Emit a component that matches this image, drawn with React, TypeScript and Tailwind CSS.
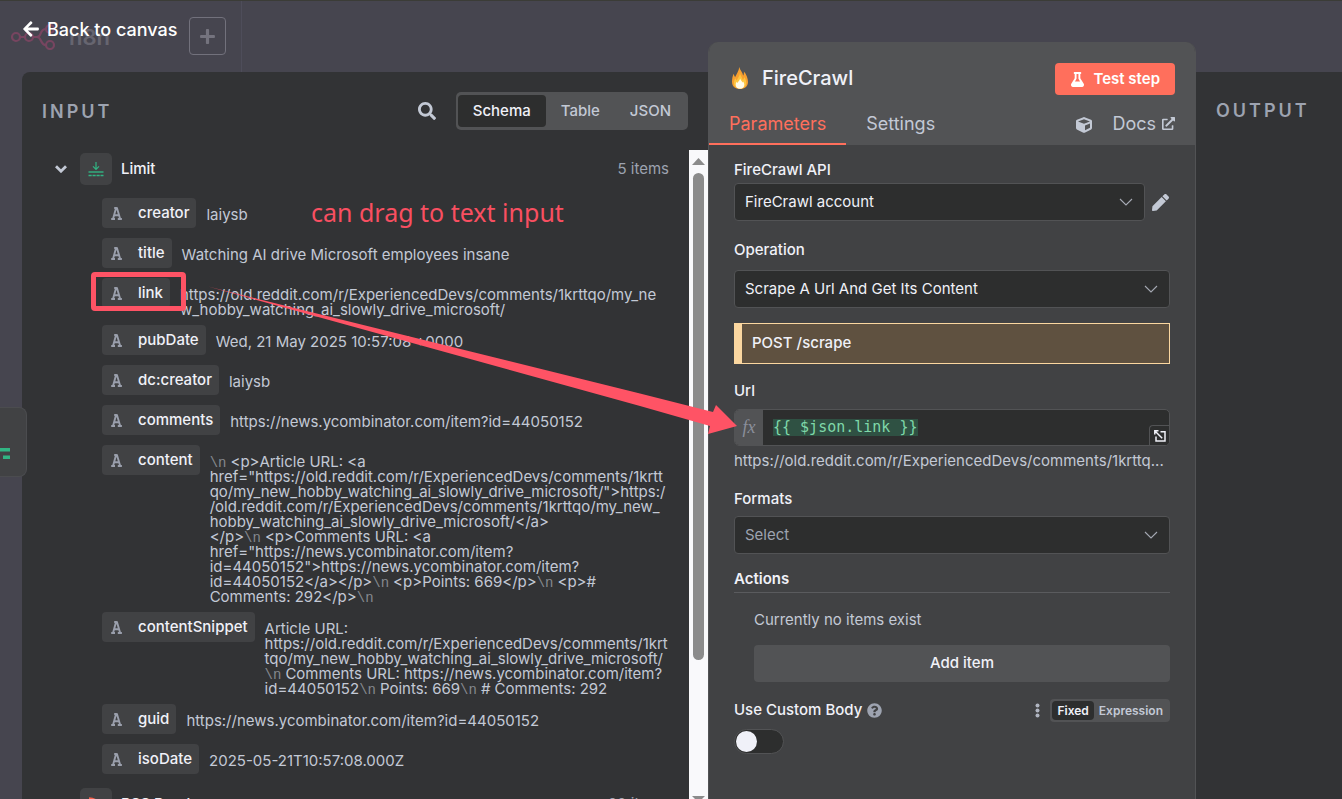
import { ReactNode } from "react";
import {
  FaArrowLeft,
  FaCube,
  FaExternalLinkAlt,
  FaFlask,
  FaPen,
  FaPlus,
  FaQuestionCircle,
  FaSearch,
} from "react-icons/fa";

type Field = { name: string; lines: string[] };

const fields: Field[] = [
  { name: "creator", lines: ["laiysb"] },
  { name: "title", lines: ["Watching AI drive Microsoft employees insane"] },
  {
    name: "link",
    lines: [
      "https://old.reddit.com/r/ExperiencedDevs/comments/1krttqo/my_ne",
      "w_hobby_watching_ai_slowly_drive_microsoft/",
    ],
  },
  { name: "pubDate", lines: ["Wed, 21 May 2025 10:57:08 +0000"] },
  { name: "dc:creator", lines: ["laiysb"] },
  { name: "comments", lines: ["https://news.ycombinator.com/item?id=44050152"] },
  {
    name: "content",
    lines: [
      "\n<p>Article URL: <a",
      'href="https://old.reddit.com/r/ExperiencedDevs/comments/1krtt',
      'qo/my_new_hobby_watching_ai_slowly_drive_microsoft/">https:/',
      "/old.reddit.com/r/ExperiencedDevs/comments/1krttqo/my_new_",
      "hobby_watching_ai_slowly_drive_microsoft/</a>",
      "</p>\n<p>Comments URL: <a",
      'href="https://news.ycombinator.com/item?',
      'id=44050152">https://news.ycombinator.com/item?',
      "id=44050152</a></p>\n<p>Points: 669</p>\n<p>#",
      "Comments: 292</p>\n",
    ],
  },
  {
    name: "contentSnippet",
    lines: [
      "Article URL:",
      "https://old.reddit.com/r/ExperiencedDevs/comments/1krt",
      "tqo/my_new_hobby_watching_ai_slowly_drive_microsoft/",
      "\nComments URL: https://news.ycombinator.com/item?",
      "id=44050152\nPoints: 669\n# Comments: 292",
    ],
  },
  { name: "guid", lines: ["https://news.ycombinator.com/item?id=44050152"] },
  { name: "isoDate", lines: ["2025-05-21T10:57:08.000Z"] },
];

function Line({ text }: { text: string }) {
  const parts = text.split("\n");
  return (
    <div className="h-[15px] whitespace-nowrap">
      {parts.map((part, i) => (
        <span key={i}>
          {i > 0 && (
            <span className="mr-1 font-['Liberation_Mono',monospace] text-[14px] text-[#85888e]">
              {"\\n"}
            </span>
          )}
          {part}
        </span>
      ))}
    </div>
  );
}

function TextTypeIcon() {
  return (
    <svg viewBox="0 0 11 13" className="h-[13px] w-[11px]" aria-hidden="true">
      <path
        d="M0.2 12h3.800M6.800 12H10.900M2 12L5 1.200h1L9.200 12M3.200 8.300h4.600M3.200 1h2.600"
        fill="none"
        stroke="#9a9fac"
        strokeWidth="1.900"
      />
    </svg>
  );
}

function FieldRow({ field }: { field: Field }) {
  return (
    <li className="mb-2 flex min-h-8 items-start gap-[10px]">
      <button className="flex h-[30px] shrink-0 items-center rounded-[4px] bg-[#414244] pr-[7px] pl-[9px] font-medium text-[#f0f1f8]">
        <TextTypeIcon />
        <span className="ml-4">{field.name}</span>
      </button>
      <div className="pt-[9px] leading-[15px] text-[#c3c9d5]">
        {field.lines.map((line, i) => (
          <Line key={i} text={line} />
        ))}
      </div>
    </li>
  );
}

function CollapseIcon() {
  return (
    <svg viewBox="0 0 12 8" className="h-2 w-3" fill="none" stroke="#c3c9d5" strokeWidth="2.800" aria-hidden="true">
      <path d="M1 1.200l5 5 5-5" />
    </svg>
  );
}

function LimitIcon() {
  return (
    <svg viewBox="0 0 16 16" className="size-4" fill="none" stroke="#31b583" aria-hidden="true">
      <path d="M8 1v7M5 5.300l3 3 3-3" strokeWidth="1.200" />
      <path d="M0.500 11h15" strokeWidth="1.400" />
      <path d="M0.500 14.500h15" strokeWidth="1.400" strokeDasharray="3.200 0.800" />
    </svg>
  );
}

function FlameIcon() {
  return (
    <svg viewBox="0 0 18 24" className="h-6 w-[18px]" aria-hidden="true">
      <path
        d="M8.200 1c.8 3.200 3.600 5 3.900 8.600.7-.9 1-2.600.8-4.200 2.500 2.900 4.100 6.800 4.100 10.500 0 4.300-3.500 7.100-8 7.100S1 20.200 1 15.900c0-3 .6-5.900 1.700-8.200.4 1.500.8 2.700 1.500 3.400C5.500 7.600 8 5.200 8.200 1z"
        fill="#f7a030"
      />
      <path
        d="M9 7c.3 2.800 2.500 4.500 2.700 7 .8-.6 1.400-1.700 1.600-3 1.300 1.800 1.900 4 1.900 6 0 3.500-2.800 5.500-6.200 5.500s-6-2-6-5.200c0-1.900.5-3.600 1.400-5 .3 1 .7 1.800 1.300 2.300C6.300 12.200 8.800 10.500 9 7z"
        fill="#fdc640"
      />
      <path
        d="M9.200 12.500c.2 1.700 1.800 2.300 2 3.900.4-.2.600-.6.800-1 .9 1 1.300 2 1.300 3.300 0 2.500-1.800 4.100-4.300 4.100s-4.300-1.600-4.300-4c0-1.300.5-2.300 1.200-3 .2.500.4.800.8 1.100.4-1.500 2-2.300 2.500-4.400z"
        fill="#fffbe8"
      />
    </svg>
  );
}

function N8nLogo() {
  return (
    <svg viewBox="0 0 46 26" className="h-[26px] w-[46px]" fill="none" stroke="#774560" strokeWidth="2.200" aria-hidden="true">
      <circle cx="5" cy="13" r="4" />
      <circle cx="18" cy="13" r="4" />
      <circle cx="39" cy="5" r="4" />
      <circle cx="39" cy="21" r="4" />
      <path d="M9 13h5M22 13h4c5 0 2-8 9-8M26 13c5 0 3 8 9 8" />
    </svg>
  );
}

function SelectBox({ id, value, muted }: { id: string; value: string; muted?: boolean }) {
  return (
    <div className="relative flex-1">
      <select
        id={id}
        className={
          muted
            ? "h-[38px] w-full appearance-none rounded-[4px] border border-[#525355] bg-[#2d2e2e] px-[10px] text-[#9da3b0]"
            : "h-[38px] w-full appearance-none rounded-[4px] border border-[#525355] bg-[#2d2e2e] px-[10px] text-[#f0f1f8]"
        }
      >
        <option>{value}</option>
      </select>
      <svg viewBox="0 0 14 8" className="pointer-events-none absolute top-[15px] right-3 h-2 w-[14px]" aria-hidden="true">
        <path d="M1 1l6 6 6-6" fill="none" stroke="#a5a9b3" strokeWidth="1.100" />
      </svg>
    </div>
  );
}

function Label({ htmlFor, children }: { htmlFor?: string; children: ReactNode }) {
  return (
    <label htmlFor={htmlFor} className="block h-[25px] leading-6 font-medium text-[#f0f1f8]">
      {children}
    </label>
  );
}

function InputPanel() {
  return (
    <section className="flex min-w-0 flex-1 flex-col rounded-tl-lg bg-[#323335]">
      <div className="flex h-[78px] shrink-0 items-center pr-5 pl-5">
        <h2 className="flex-1 text-[18px] font-semibold tracking-[3px] text-[#9da3b0]">INPUT</h2>
        <button aria-label="Search" className="mr-5 text-[18px] text-[#c3c9d5]">
          <FaSearch />
        </button>
        <div className="flex h-[38px] items-center rounded-[5px] bg-[#525355] p-[2px] font-medium text-[#c3c9d5]">
          <button className="h-8 rounded-[4px] bg-[#2d2e2e] px-[15px] text-[#f0f1f8]">Schema</button>
          <button className="h-8 px-[15px]">Table</button>
          <button className="h-8 px-[15px]">JSON</button>
        </div>
      </div>
      <div className="flex min-h-0 flex-1">
        <div className="min-w-0 flex-1 overflow-hidden pt-[3px] pl-8">
          <div className="flex h-8 items-center pr-5">
            <button aria-label="Collapse Limit" className="flex w-[26px] pl-px">
              <CollapseIcon />
            </button>
            <span className="flex size-8 items-center justify-center rounded-[5px] bg-[#414244]">
              <LimitIcon />
            </span>
            <span className="ml-[9px] flex-1 font-medium text-[#f0f1f8]">Limit</span>
            <span className="text-[#9da3b0]">5 items</span>
          </div>
          <ul className="pt-[13px] pl-12">
            {fields.map((field) => (
              <FieldRow key={field.name} field={field} />
            ))}
          </ul>
          <div className="flex h-8 items-center pt-2 pr-5">
            <button aria-label="Collapse RSS Read" className="flex w-[26px] pl-px">
              <CollapseIcon />
            </button>
            <span className="flex size-8 shrink-0 items-center justify-center rounded-[5px] bg-[#414244]">
              <svg viewBox="0 0 16 16" className="size-4" fill="none" stroke="#f7614b" strokeWidth="2.500" aria-hidden="true">
                <path d="M1 2.500A12.500 12.500 0 0 1 13.500 15M1 7a8 8 0 0 1 8 8" />
                <circle cx="3" cy="13" r="1" />
              </svg>
            </span>
            <span className="ml-[9px] flex-1 font-medium text-[#f0f1f8]">RSS Read</span>
            <span className="text-[#9da3b0]">20 items</span>
          </div>
        </div>
        <div className="flex w-[19px] flex-col items-center bg-[#f9f9fb] pt-2">
          <svg viewBox="0 0 13 7" className="h-[7px] w-[13px]" aria-hidden="true">
            <path d="M0 7L6.500 0 13 7z" fill="#8b8b8b" />
          </svg>
          <div className="mt-2 h-[76%] w-[11px] rounded-full bg-[#8b8b8b]" />
          <div className="flex-1" />
          <svg viewBox="0 0 13 3" className="h-[3px] w-[13px]" aria-hidden="true">
            <path d="M0 0h13l-3 3H3z" fill="#8b8b8b" />
          </svg>
        </div>
      </div>
    </section>
  );
}

function NodePanel() {
  return (
    <section className="-mt-[30px] flex w-[488px] shrink-0 flex-col overflow-hidden rounded-t-[10px] border-x border-[#525355] bg-[#414244]">
      <header className="flex h-[103px] shrink-0 flex-col bg-[#525355] pr-5">
        <div className="flex items-start pt-5 pl-[22px]">
          <span className="flex h-8 items-center">
            <FlameIcon />
          </span>
          <h1 className="ml-[13px] flex-1 text-[20px] leading-8 font-medium text-[#f0f1f8]">FireCrawl</h1>
          <button className="mt-px flex h-8 items-center gap-2 rounded-[4px] bg-[#ff6f5c] px-[15px] font-semibold text-white">
            <FaFlask className="text-[15px]" />
            Test step
          </button>
        </div>
        <nav className="flex flex-1 items-stretch text-[18px] text-[#c3c9d5]">
          <button className="border-b-2 border-[#ff6f5c] px-5 pt-[9px] text-[#ff6f5c]">Parameters</button>
          <button className="border-b-2 border-transparent px-5 pt-[9px]">Settings</button>
          <span className="flex-1" />
          <span className="mr-5 flex items-center pt-[9px] text-[16px]">
            <FaCube />
          </span>
          <a href="#docs" className="flex items-center gap-[6px] pt-[7px]">
            Docs
            <FaExternalLinkAlt className="text-[13px]" />
          </a>
        </nav>
      </header>
      <div className="flex flex-col pt-[13px] pr-[25px] pl-[25px]">
        <Label htmlFor="credential">FireCrawl API</Label>
        <div className="flex items-center">
          <SelectBox id="credential" value="FireCrawl account" />
          <button aria-label="Edit credential" className="ml-[7px] pr-px text-[17px] text-[#c3c9d5]">
            <FaPen />
          </button>
        </div>

        <div className="mt-[17px] mb-[7px]">
          <Label htmlFor="operation">Operation</Label>
        </div>
        <div className="flex">
          <SelectBox id="operation" value="Scrape A Url And Get Its Content" />
        </div>
        <div className="mt-[15px] flex h-[41px] items-center border border-l-8 border-[#fbd7a0] bg-[#5f5140] pl-[10px] font-medium text-[#f0f1f8]">
          POST /scrape
        </div>

        <div className="mt-[15px] mb-[5px]">
          <Label htmlFor="url">Url</Label>
        </div>
        <div className="relative flex h-[37px] overflow-hidden rounded-[5px] border border-[#525355] bg-[#2d2e2e]">
          <span className="flex w-7 items-center justify-center bg-[#525355] font-['Liberation_Serif',serif] text-[18px] text-[#8b8f9b] italic">
            fx
          </span>
          <div className="flex flex-1 items-center pl-[10px]">
            <input
              id="url"
              defaultValue="{{ $json.link }}"
              className="field-sizing-content h-[17px] bg-[#2f5143] font-['DejaVu_Sans_Mono',monospace] text-[15px] leading-[17px] text-[#7fd8a9] outline-none"
            />
          </div>
          <button
            aria-label="Open expression editor"
            className="absolute right-0 bottom-0 flex size-5 items-center justify-center rounded-tl-[4px] border-t border-l border-[#525355] bg-[#2d2e2e]"
          >
            <svg viewBox="0 0 12 12" className="size-3" fill="none" stroke="#f0f1f8" strokeWidth="1.500" aria-hidden="true">
              <path d="M6.500 1.700h4.500v9.300H2V6.500M1.200 1.200l7 7M0.800 4.500V0.800H4.500" />
            </svg>
          </button>
        </div>
        <p className="h-[30px] truncate leading-[30px] text-[#c3c9d5]">
          https://old.reddit.com/r/ExperiencedDevs/comments/1krttq...
        </p>

        <div className="mt-[11px] mb-1">
          <Label htmlFor="formats">Formats</Label>
        </div>
        <div className="flex">
          <SelectBox id="formats" value="Select" muted />
        </div>

        <h3 className="mt-3 border-b border-[#5a5b5e] text-[15px] leading-[26px] font-semibold text-[#f0f1f8]">
          Actions
        </h3>
        <div className="pl-5">
          <p className="pt-[15px] pb-[13px] leading-6 text-[#c3c9d5]">Currently no items exist</p>
          <button className="h-[37px] w-full rounded-[4px] bg-[#525355] font-medium text-[#f0f1f8]">
            Add item
          </button>
        </div>

        <div className="mt-4 flex items-center">
          <Label htmlFor="custom-body">Use Custom Body</Label>
          <FaQuestionCircle className="ml-[5px] text-[15px] text-[#9da3b0]" />
          <span className="flex-1" />
          <button aria-label="Parameter options" className="mr-[10px]">
            <svg viewBox="0 0 5 15" className="h-[15px] w-[5px]" fill="#b0b5c1" aria-hidden="true">
              <circle cx="2.500" cy="2.500" r="2" />
              <circle cx="2.500" cy="7.500" r="2" />
              <circle cx="2.500" cy="12.500" r="2" />
            </svg>
          </button>
          <div className="flex h-[23px] items-center rounded-[4px] bg-[#525355] p-[2px] text-[12px] font-semibold text-[#c3c9d5]">
            <button className="h-[19px] rounded-[4px] bg-[#2d2e2e] px-[5px] text-[#f0f1f8]">Fixed</button>
            <button className="h-[19px] px-[5px]">Expression</button>
          </div>
        </div>
        <label className="mt-[6px] flex h-[25px] w-[50px] items-center rounded-full border border-[#525355] bg-[#2d2e2e] pl-px">
          <input id="custom-body" type="checkbox" role="switch" className="peer sr-only" />
          <span className="size-[21px] rounded-full bg-[#f0f1f8] peer-checked:ml-6" />
        </label>
      </div>
    </section>
  );
}

export default function App() {
  return (
    <div className="relative flex h-screen flex-col overflow-hidden bg-[#46454f] font-['Inter','Liberation_Sans',sans-serif] text-[15px]">
      <header className="flex h-[72px] shrink-0 border-t border-[#3b3c37]">
        <div className="flex w-[242px] items-start border-r border-[#4e4d5a]">
          <div className="mt-[23px] flex h-[26px] items-center pl-[11px]">
            <N8nLogo />
            <span className="ml-3 text-[22px] leading-[26px] font-semibold text-[#666570]">n8n</span>
          </div>
          <span className="flex-1" />
          <button
            aria-label="Create"
            className="mt-4 mr-[15px] flex h-[38px] w-[37px] items-center justify-center rounded-[4px] border border-[#72717c] text-[17px] text-[#74737e]"
          >
            <FaPlus />
          </button>
        </div>
      </header>
      <a
        href="#canvas"
        className="absolute top-4 left-[22px] flex h-[26px] items-center gap-[7px] text-[18px] font-medium text-white"
      >
        <FaArrowLeft />
        Back to canvas
      </a>

      <main className="flex min-h-0 flex-1 pl-[22px]">
        <InputPanel />
        <NodePanel />
        <section className="w-[146px] shrink-0 bg-[#323335] pl-5">
          <h2 className="text-[18px] leading-[78px] font-semibold tracking-[3px] text-[#9da3b0]">OUTPUT</h2>
        </section>
      </main>

      {/* Neighbouring canvas node peeking in from the left */}
      <div className="absolute top-[407px] left-0 h-[70px] w-[27px] rounded-r-[8px] border border-l-0 border-[#4b4c4f] bg-[#414244]">
        <svg viewBox="0 0 10 12" className="mt-[39px] h-3 w-[10px]" fill="#31b583" aria-hidden="true">
          <path d="M0 1h10v3.500H0zM3 8.500h7V12H3z" />
        </svg>
      </div>

      {/* Drag annotation */}
      <div className="pointer-events-none absolute inset-0">
        <div className="absolute top-[272px] left-[91px] h-[39px] w-[95px] rounded-[4px] border-[5px] border-[#ff5365]" />
        <p className="absolute top-[195px] left-[311px] font-['Noto_Sans',sans-serif] text-[25px] leading-[34px] whitespace-nowrap text-[#f94f61]">
          can drag to text input
        </p>
        <svg viewBox="0 0 530 148" className="absolute top-[286px] left-[208px] h-[148px] w-[530px]" aria-hidden="true">
          <path d="M0 0.500L432 107.500 505 126 508 119 529 140 500 148 502 140 432 120z" fill="#ff5365" />
        </svg>
      </div>
    </div>
  );
}
